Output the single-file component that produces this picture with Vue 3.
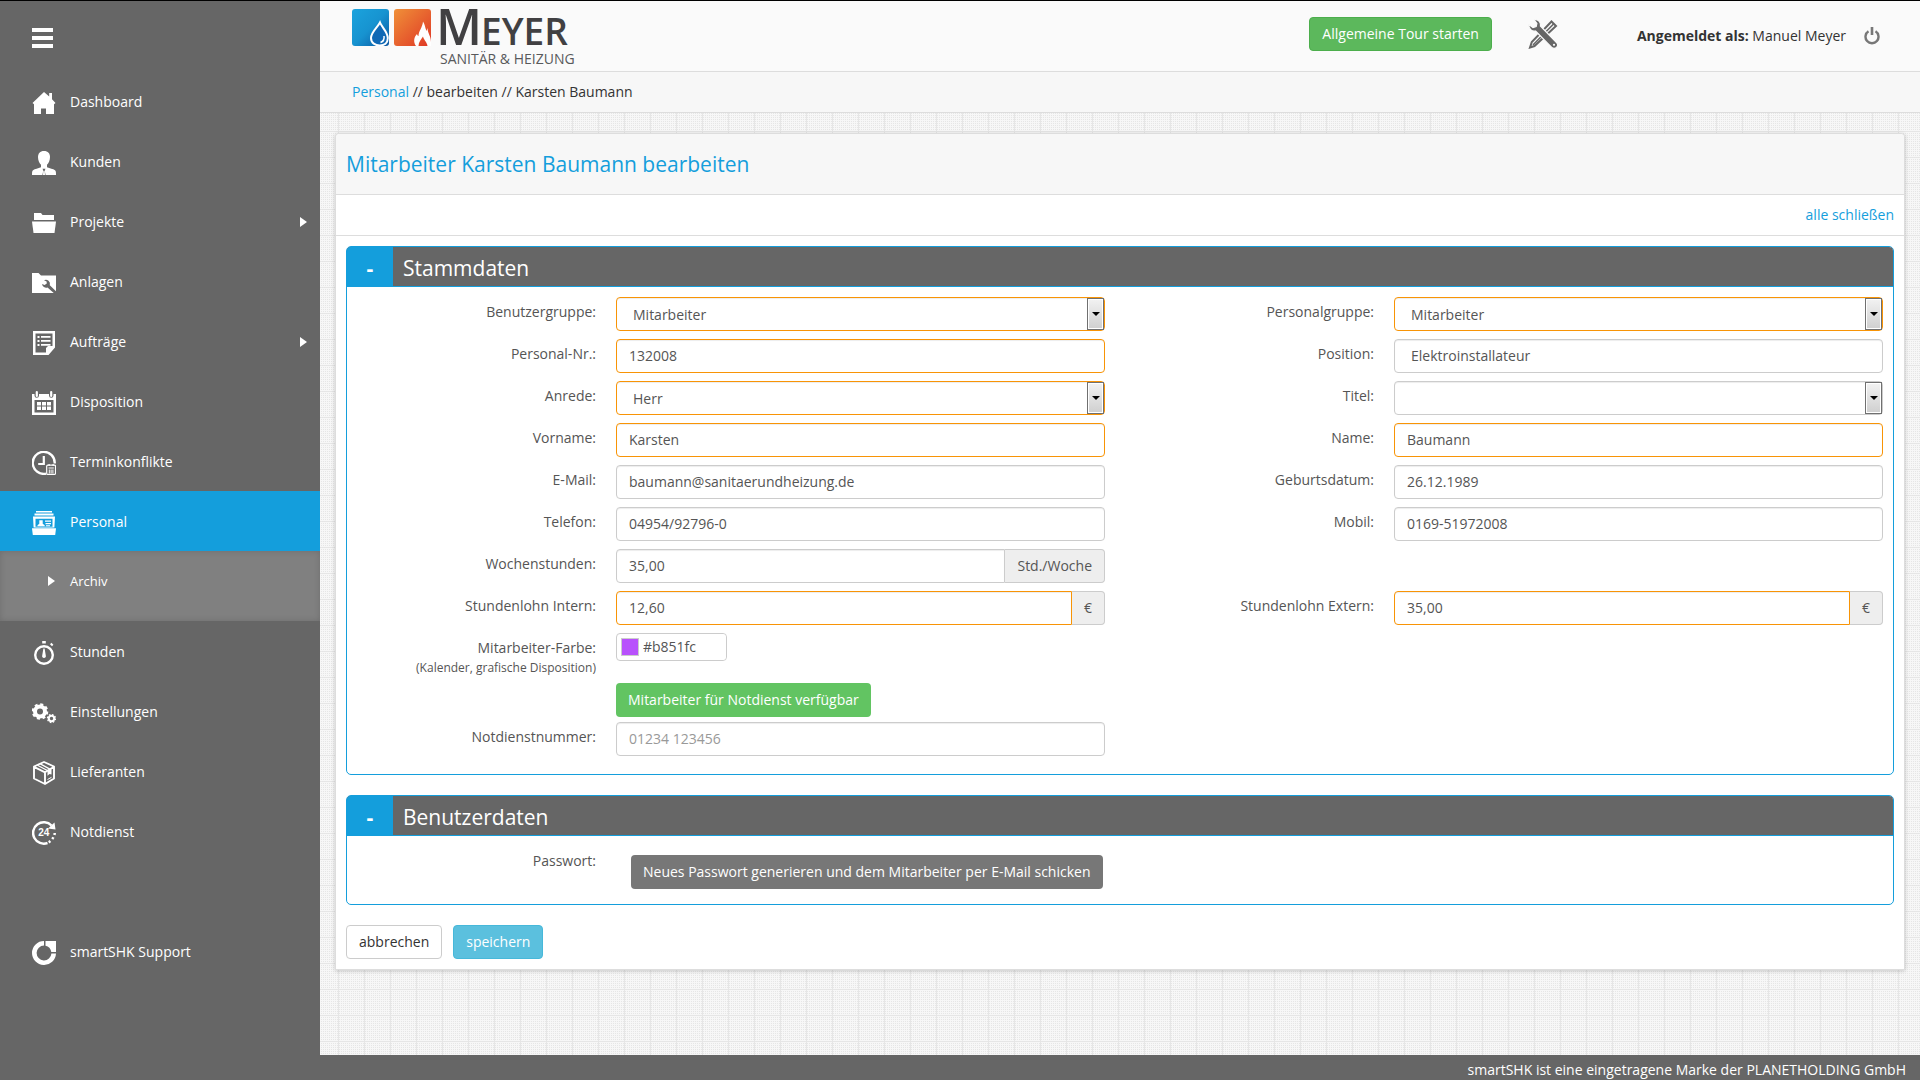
<script setup>
import { ref } from 'vue'

const menu = [
  { icon: 'home', label: 'Dashboard' },
  { icon: 'user', label: 'Kunden' },
  { icon: 'folder', label: 'Projekte', more: true },
  { icon: 'plant', label: 'Anlagen' },
  { icon: 'order', label: 'Aufträge', more: true },
  { icon: 'calendar', label: 'Disposition' },
  { icon: 'clock', label: 'Terminkonflikte' },
  { icon: 'staff', label: 'Personal', active: true, children: ['Archiv'] },
  { icon: 'watch', label: 'Stunden' },
  { icon: 'gears', label: 'Einstellungen' },
  { icon: 'box', label: 'Lieferanten' },
  { icon: 'emergency', label: 'Notdienst' },
  { icon: 'support', label: 'smartSHK Support', spaced: true },
]

const fields = ref([
  { id: 'benutzergruppe', label: 'Benutzergruppe:', side: 'left', type: 'select', value: 'Mitarbeiter', required: true },
  { id: 'personalgruppe', label: 'Personalgruppe:', side: 'right', type: 'select', value: 'Mitarbeiter', required: true },
  { id: 'personalnr', label: 'Personal-Nr.:', side: 'left', type: 'text', value: '132008', required: true },
  { id: 'position', label: 'Position:', side: 'right', type: 'text', value: 'Elektroinstallateur', combo: true },
  { id: 'anrede', label: 'Anrede:', side: 'left', type: 'select', value: 'Herr', required: true },
  { id: 'titel', label: 'Titel:', side: 'right', type: 'select', value: '' },
  { id: 'vorname', label: 'Vorname:', side: 'left', type: 'text', value: 'Karsten', required: true },
  { id: 'name', label: 'Name:', side: 'right', type: 'text', value: 'Baumann', required: true },
  { id: 'email', label: 'E-Mail:', side: 'left', type: 'text', value: 'baumann@sanitaerundheizung.de' },
  { id: 'geburtsdatum', label: 'Geburtsdatum:', side: 'right', type: 'text', value: '26.12.1989' },
  { id: 'telefon', label: 'Telefon:', side: 'left', type: 'text', value: '04954/92796-0' },
  { id: 'mobil', label: 'Mobil:', side: 'right', type: 'text', value: '0169-51972008' },
  { id: 'wochenstunden', label: 'Wochenstunden:', side: 'left', type: 'text', value: '35,00', unit: 'Std./Woche' },
  { id: 'lohnintern', label: 'Stundenlohn Intern:', side: 'left', type: 'text', value: '12,60', unit: '€', required: true },
  { id: 'lohnextern', label: 'Stundenlohn Extern:', side: 'right', type: 'text', value: '35,00', unit: '€', required: true },
])

const color = ref('#b851fc')
const emergencyNumber = ref('')
</script>

<template>
  <div class="page">
    <aside class="sidebar">
      <button class="toggle" type="button" aria-label="Menü">
        <span></span><span></span><span></span>
      </button>
      <nav>
        <template v-for="item in menu" :key="item.label">
          <a href="#" class="item" :class="{ active: item.active, spaced: item.spaced }">
            <svg class="icon" viewBox="0 0 24 24" width="24" height="24" fill="#fff">
              <g v-if="item.icon === 'home'">
                <path d="M12 1 0.5 12 2 13.2V23h7v-5.5h5V23h8v-9.800l1.500-1.200L20 8.300V2h-2.800v3.600z" />
              </g>
              <g v-else-if="item.icon === 'user'">
                <path d="M12 0c4 0 6 2.600 6 6 0 3.500-1.500 6.300-3 7.800v2.400c3 1.300 6 1.600 8 3 1 .8 1 2.500 1 4.800H0c0-2.300 0-4 1-4.800 2-1.400 5-1.700 8-3v-2.400C7.500 12.300 6 9.500 6 6c0-3.400 2-6 6-6z" />
                <path d="M10.500 17.800h3l-.8 1.700.9 4.500h-3.200l.9-4.500z" fill="#666" />
                <path d="M11.300 20h1.400l.3 4h-2z" />
              </g>
              <g v-else-if="item.icon === 'folder'">
                <path d="M2 2h7l1.500 2H22v5H2z" />
                <path d="M0 10.500h24l-1.500 11.500h-21z" />
              </g>
              <g v-else-if="item.icon === 'plant'">
                <path d="M0 2h6.500l2.500 2.500h15V22H0z" />
                <path d="M12 9.200a4.200 4.200 0 0 1 5.800 5L24 20.300V24l-8.500-7.600a4.200 4.200 0 0 1-5.500-3.400l2.600 1 2.200-1.500-.2-2z" fill="#666" />
              </g>
              <g v-else-if="item.icon === 'order'">
                <path d="M1 0h22v16.500L16.500 24H1zM3.500 2.500v19H14V17l2-2h4.500V2.500z" fill-rule="evenodd" />
                <path d="M5.500 5h2v2h-2zM9 5h9.500v1.800H9zM5.500 9h2v2h-2zM9 9h9.500v1.800H9zM5.500 13h2v2h-2zM9 13h9.500v1.800H9z" />
              </g>
              <g v-else-if="item.icon === 'calendar'">
                <path d="M0 3h2.500v1.500A2.200 2.200 0 0 0 7 4.500V3h10v1.500a2.200 2.200 0 0 0 4.500 0V3H24v21H0zM2.500 9v12.500h19V9z" fill-rule="evenodd" />
                <rect x="3.700" y="0" width="2.200" height="6" rx="1.100" />
                <rect x="18.100" y="0" width="2.200" height="6" rx="1.100" />
                <path d="M5 11h4v3.500H5zM10 11h4v3.500h-4zM15 11h4v3.500h-4zM5 15.500h4V19H5zM10 15.500h4V19h-4zM15 15.500h4V19h-4z" />
              </g>
              <g v-else-if="item.icon === 'clock'">
                <path d="M22.700 12.500A11 11 0 1 0 14 22.600" fill="none" stroke="#fff" stroke-width="2.400" />
                <path d="M11.800 5v8H6.200" fill="none" stroke="#fff" stroke-width="2.200" />
                <rect x="14.700" y="14.200" width="8.800" height="9.200" rx="1" fill="none" stroke="#fff" stroke-width="1.200" />
                <path d="M16.500 16.500h5.300v1h-5.300zM16.800 18.500h1v4h-1zM18.600 18.500h1v4h-1zM20.400 18.500h1v4h-1zM16.500 13h1.200v2h-1.200zM20.500 13h1.200v2h-1.200z" />
              </g>
              <g v-else-if="item.icon === 'staff'">
                <path d="M4 0h16v1.600H4zM2.500 2.600h19v1.800h-19z" />
                <path d="M1 5.500h22l-.6 11H1.600zM3.500 7.800v8h17v-8z" fill-rule="evenodd" />
                <path d="M0 17.200h24l-.8 6.800H.8z" />
                <path d="M7.300 9.300h3.400v3.500l2 1.500v1H5.500v-1l1.800-1.500zM13 9.500h6v1.300h-6zM13.500 12h5.500v1.200h-5.500zM14 14.200h4v1h-4z" />
              </g>
              <g v-else-if="item.icon === 'watch'">
                <circle cx="12" cy="14" r="8.800" fill="none" stroke="#fff" stroke-width="2.400" />
                <path d="M10.200 0h3.600v2.600h-3.600zM18 3.200l1.400-1.400 2 2L20 5.200zM11.400 7.500h1.200l1.200 7a1.900 1.900 0 1 1-3.600 0z" />
              </g>
              <g v-else-if="item.icon === 'gears'">
                <circle cx="8" cy="10.500" r="5" fill="none" stroke="#fff" stroke-width="4" />
                <circle cx="8" cy="10.500" r="7.200" fill="none" stroke="#fff" stroke-width="2.200" stroke-dasharray="3 2.655" />
                <circle cx="19.500" cy="17.500" r="2.700" fill="none" stroke="#fff" stroke-width="2" />
                <circle cx="19.500" cy="17.500" r="4" fill="none" stroke="#fff" stroke-width="1.300" stroke-dasharray="1.600 1.542" />
              </g>
              <g v-else-if="item.icon === 'box'">
                <path d="M12 1 22 5.500v12L13 23 2 17.500v-12zM2 5.800l11 5.500 9-5.500M13 11.300V23" fill="none" stroke="#fff" stroke-width="1.900" stroke-linejoin="round" />
                <path d="M4.700 4.500 15.500 10.300v4.500l2-1.800 2 .5V8.300L9 2.600l-1.400.6L17.500 8.700l-.8.7L6.200 3.900z" />
                <path d="M15.500 18.500l4-2.200" stroke="#fff" stroke-width="1" />
              </g>
              <g v-else-if="item.icon === 'emergency'">
                <path d="M19.500 4.500A10.700 10.700 0 1 0 15.500 22" fill="none" stroke="#fff" stroke-width="2.500" />
                <path d="M22.500 1.500 23.500 8.500 16 7.500zM21.500 12h2.500l-.3 2.200-2.500-.4zM20.200 15.800l2.300 1-1.200 2-2-1.300zM17.500 19l1.700 1.900-1.900 1.500-1.200-2.200z" />
                <text x="6.200" y="15.200" class="emergency-text">24</text>
              </g>
              <g v-else>
                <path d="M12 0v4.600a7.400 7.400 0 1 0 7.400 7.900H24A12 12 0 1 1 12 0z" />
                <path d="M13.500 0H24v11h-4.700c-.5-3.300-2.600-5.600-5.800-6.200z" />
              </g>
            </svg>
            <span class="item-label">{{ item.label }}</span>
            <span v-if="item.more" class="caret"></span>
          </a>
          <div v-if="item.children" class="submenu">
            <a v-for="child in item.children" :key="child" href="#" class="subitem">
              <span class="caret"></span>{{ child }}
            </a>
          </div>
        </template>
      </nav>
    </aside>

    <div class="main">
      <header class="topbar">
        <svg class="logo" width="224" height="62" viewBox="0 0 224 62" role="img" aria-label="Meyer Sanitär &amp; Heizung">
          <defs>
            <linearGradient id="water" x1="0" y1="0" x2="1" y2="1">
              <stop offset="0" stop-color="#1ba3dd" />
              <stop offset="0.500" stop-color="#1793d0" />
              <stop offset="1" stop-color="#0b55a0" />
            </linearGradient>
            <linearGradient id="fire" x1="0" y1="0" x2="1" y2="1">
              <stop offset="0" stop-color="#f09038" />
              <stop offset="1" stop-color="#df3826" />
            </linearGradient>
          </defs>
          <rect x="0" y="3" width="37" height="37" rx="3" fill="url(#water)" />
          <path d="M28 16.500c2 5 7.800 9.500 7.800 15.500 0 5-3.600 7.500-8 7.500s-8.800-2.500-8.800-7.500c0-6 6.500-10.500 9-15.500z" fill="#1069b5" stroke="#fff" stroke-width="2" />
          <path d="M32 30c.5 3-1 5.500-3.500 6.500" fill="none" stroke="#fff" stroke-width="1.500" />
          <rect x="42" y="3" width="37" height="37" rx="3" fill="url(#fire)" />
          <path d="M64 40c-3-4-2-9 1-12 .3 1 .6 1.600 1.500 2 0-5 4-8.500 4.500-14.500 2 3 2 6 3.500 9.500l1-3c0 5 3.500 8 3.500 14V40h-3.500c-.5-4-3.500-5.500-4.500-9.500-2 3-4.500 5.500-4.500 9.500z" fill="#fff" />
          <text x="84" y="39" class="logo-big">M</text>
          <text x="129" y="39" class="logo-mid">EYER</text>
          <text x="88" y="58" class="logo-sub">SANITÄR &amp; HEIZUNG</text>
        </svg>
        <div class="tools">
          <button type="button" class="btn btn-tour">Allgemeine Tour starten</button>
          <a href="#" class="wrench" aria-label="Werkzeuge">
            <svg width="30" height="30" viewBox="0 0 30 30">
              <path d="M23.500 2.500 28 7 6.500 27 2 28.500 3.800 23z" fill="none" stroke="#666" stroke-width="2" />
              <path d="M26 4.500 5 26" stroke="#666" stroke-width="1.600" />
              <path d="M6 .8c4-.8 7 2 6.400 6.200L28.500 23.500a3.300 3.300 0 0 1-4.800 4.800L7.500 12C4 12.800.5 10 .8 5.500L5 8.500l3.200-1 .7-3.200z" fill="#666" stroke="#fafafa" stroke-width="1.200" />
              <circle cx="26" cy="25.800" r="1.100" fill="#fafafa" />
            </svg>
          </a>
          <div class="account">
            <span><b>Angemeldet als:</b> Manuel Meyer</span>
            <a href="#" class="power" aria-label="Abmelden">
              <svg width="16" height="18" viewBox="0 0 16 18">
                <path d="M4.500 4.300a6.500 6.500 0 1 0 7 0" fill="none" stroke="#777" stroke-width="2.400" />
                <path d="M8 0v8" stroke="#777" stroke-width="2.600" />
              </svg>
            </a>
          </div>
        </div>
      </header>

      <div class="breadcrumb"><a href="#">Personal</a>&nbsp;// bearbeiten // Karsten Baumann</div>

      <main class="content">
        <form class="card" @submit.prevent>
          <h1>Mitarbeiter Karsten Baumann bearbeiten</h1>
          <div class="card-links"><a href="#">alle schließen</a></div>
          <div class="card-body">
            <section class="group">
              <div class="group-head">
                <button type="button" class="collapse" aria-label="Stammdaten schließen">-</button>
                <h2>Stammdaten</h2>
              </div>
              <div class="fields">
                <div v-for="field in fields" :key="field.id" class="field" :class="field.side">
                  <label :for="field.id">{{ field.label }}</label>
                  <div v-if="field.type === 'select'" class="select">
                    <select :id="field.id" v-model="field.value" :class="{ required: field.required }">
                      <option>{{ field.value }}</option>
                    </select>
                    <span class="select-button"></span>
                  </div>
                  <div v-else class="control">
                    <input
                      :id="field.id"
                      v-model="field.value"
                      type="text"
                      :class="{ required: field.required, combo: field.combo, joined: field.unit }"
                    />
                    <span v-if="field.unit" class="unit">{{ field.unit }}</span>
                  </div>
                </div>

                <div class="field left">
                  <label for="farbe">Mitarbeiter-Farbe:<small>(Kalender, grafische Disposition)</small></label>
                  <div class="color">
                    <span class="swatch" :style="{ background: color }"></span>
                    <input id="farbe" v-model="color" type="text" />
                  </div>
                </div>
                <div class="field left tight">
                  <span></span>
                  <div><button type="button" class="btn btn-available">Mitarbeiter für Notdienst verfügbar</button></div>
                </div>
                <div class="field left">
                  <label for="notdienst">Notdienstnummer:</label>
                  <div class="control">
                    <input id="notdienst" v-model="emergencyNumber" type="text" placeholder="01234 123456" />
                  </div>
                </div>
              </div>
            </section>

            <section class="group">
              <div class="group-head">
                <button type="button" class="collapse" aria-label="Benutzerdaten schließen">-</button>
                <h2>Benutzerdaten</h2>
              </div>
              <div class="fields password">
                <div class="field left">
                  <label for="passwort">Passwort:</label>
                  <div class="password-action">
                    <button id="passwort" type="button" class="btn btn-dark">Neues Passwort generieren und dem Mitarbeiter per E-Mail schicken</button>
                  </div>
                </div>
              </div>
            </section>

            <div class="actions">
              <button type="button" class="btn btn-plain">abbrechen</button>
              <button type="submit" class="btn btn-save">speichern</button>
            </div>
          </div>
        </form>
      </main>

      <footer>smartSHK ist eine eingetragene Marke der PLANETHOLDING GmbH</footer>
    </div>
  </div>
</template>

<style>
body {
  margin: 0;
}
</style>

<style scoped>
* {
  box-sizing: border-box;
}

.page {
  display: flex;
  min-height: 100vh;
  border-top: 1px solid #000;
  font-family: "Open Sans", "Noto Sans", sans-serif;
  font-size: 14px;
  line-height: 20px;
  color: #333;
}

button,
input,
select {
  font: inherit;
}

a {
  color: #149edc;
  text-decoration: none;
}

/* Sidebar */
.sidebar {
  flex: 0 0 320px;
  background: #666;
}

.toggle {
  display: flex;
  flex-direction: column;
  gap: 4px;
  width: 21px;
  margin: 27px 0 23px 32px;
  padding: 0;
  border: 0;
  background: none;
}

.toggle span {
  width: 21px;
  height: 4px;
  background: #fff;
}

.item {
  display: flex;
  align-items: center;
  height: 60px;
  padding: 2px 13px 0 32px;
  color: #fff;
}

.item.active {
  background: #149edc;
}

.item.spaced {
  margin-top: 60px;
}

.icon {
  margin: 2px 14px 0 0;
}

.item-label {
  flex: 1;
}

.emergency-text {
  font: bold 10px "Liberation Sans", sans-serif;
}

.caret {
  border-style: solid;
  border-width: 5px 0 5px 7px;
  border-color: transparent transparent transparent #fff;
}

.submenu {
  height: 70px;
  background: #808080;
  box-shadow: inset 0 0 6px rgba(0, 0, 0, 0.15);
}

.subitem {
  display: flex;
  align-items: center;
  gap: 15px;
  height: 60px;
  padding-left: 48px;
  font-size: 13px;
  color: #fff;
}

/* Header */
.main {
  display: flex;
  flex: 1;
  flex-direction: column;
  min-width: 0;
}

.topbar {
  display: flex;
  justify-content: space-between;
  height: 71px;
  padding: 0 40px 0 32px;
  border-bottom: 1px solid #ddd;
  background: #fafafa;
}

.logo {
  margin-top: 5px;
}

.logo-big {
  font-size: 50px;
  font-weight: 600;
  fill: #414042;
}

.logo-mid {
  font-size: 37px;
  font-weight: 600;
  fill: #414042;
}

.logo-sub {
  font-size: 14px;
  fill: #58595b;
}

.tools {
  display: flex;
  align-items: center;
  height: 34px;
  margin-top: 16px;
}

.wrench {
  display: flex;
  margin: 0 79px 0 36px;
}

.account {
  display: flex;
  align-items: center;
  gap: 18px;
  margin-top: 4px;
}

.power {
  display: flex;
}

.breadcrumb {
  padding: 10px 32px;
  border-bottom: 1px solid #ddd;
  background: #f7f7f7;
}

/* Content */
.content {
  flex: 1;
  padding: 20px 15px;
  background-color: #f7f7f7;
  background-image:
    linear-gradient(90deg, #e6e6e6 1px, transparent 1px),
    linear-gradient(#e6e6e6 1px, transparent 1px),
    linear-gradient(90deg, #f7f7f7 1px, transparent 1px),
    linear-gradient(#e6e6e6 1px, transparent 1px);
  background-position: 18px 18px, 18px 18px, 0 0, 0 0;
  background-size: 26px 26px, 26px 26px, 2px 2px, 2px 2px;
}

.card {
  border: 1px solid #ddd;
  border-radius: 4px 4px 0 0;
  background: #fff;
  box-shadow: 0 1px 4px rgba(0, 0, 0, 0.2);
}

h1,
h2 {
  margin: 0;
  font-size: 21px;
  font-weight: 400;
}

h1 {
  padding: 15px 10px;
  border-bottom: 1px solid #ddd;
  border-radius: 4px 4px 0 0;
  background: #f7f7f7;
  line-height: 30px;
  color: #149edc;
}

.card-links {
  padding: 10px;
  border-bottom: 1px solid #ddd;
  text-align: right;
}

.card-body {
  display: flex;
  flex-direction: column;
  gap: 20px;
  padding: 10px;
}

.group {
  border: 1px solid #149edc;
  border-radius: 5px;
  overflow: hidden;
}

.group-head {
  display: flex;
  height: 40px;
  border-bottom: 1px solid #149edc;
  background: #666;
  color: #fff;
}

.group-head h2 {
  padding-left: 10px;
  line-height: 43px;
}

.collapse {
  width: 46px;
  padding: 2px 0 0;
  border: 0;
  background: #149edc;
  font-size: 21px;
  font-weight: 700;
  color: #fff;
}

.fields {
  display: grid;
  grid-template-columns: 1fr 1fr;
  gap: 8px 20px;
  padding: 10px 10px 18px 0;
}

.fields.password {
  padding-bottom: 15px;
}

.field {
  display: grid;
  grid-template-columns: 249px minmax(0, 1fr);
  column-gap: 20px;
  align-items: start;
}

.left {
  grid-column: 1;
}

.right {
  grid-column: 2;
}

.tight {
  margin-bottom: -3px;
}

label {
  padding-top: 5px;
  text-align: right;
  color: #555;
}

small {
  display: block;
  margin-bottom: -3px;
  font-size: 12px;
  line-height: 20px;
}

.control {
  display: flex;
}

input,
select {
  width: 100%;
  min-width: 0;
  height: 34px;
  margin: 0;
  padding: 0 12px 2px;
  border: 1px solid #ccc;
  border-radius: 4px;
  outline: 0;
  background: #fff;
  box-shadow: inset 0 1px 1px rgba(0, 0, 0, 0.075);
  color: #555;
}

input::placeholder {
  color: #999;
  opacity: 1;
}

input.combo {
  padding-left: 16px;
}

input.joined {
  flex: 1;
  border-radius: 4px 0 0 4px;
}

.required {
  border-color: #f89406;
}

.unit {
  padding: 6px 12px;
  border: 1px solid #ccc;
  border-left: 0;
  border-radius: 0 4px 4px 0;
  background: #eee;
  color: #555;
}

.select {
  position: relative;
}

select {
  padding: 2px 20px 0 16px;
  appearance: none;
}

.select-button {
  position: absolute;
  top: 1px;
  right: 1px;
  bottom: 1px;
  display: flex;
  align-items: center;
  justify-content: center;
  width: 17px;
  border: 1px solid #707070;
  background: linear-gradient(#f2f2f2, #cfcfcf);
  box-shadow: inset 0 0 0 1px #fff;
  pointer-events: none;
}

.select-button::after {
  border-style: solid;
  border-width: 4px 4px 0;
  border-color: #000 transparent transparent;
  content: "";
}

.color {
  display: flex;
  align-items: center;
  gap: 4px;
  width: 111px;
  height: 28px;
  margin-bottom: 14px;
  padding-left: 4px;
  border: 1px solid #ccc;
  border-radius: 4px;
}

.swatch {
  flex: 0 0 18px;
  height: 18px;
  border: 1px solid #ccc;
}

.color input {
  height: 26px;
  padding: 0 0 2px;
  border: 0;
  box-shadow: none;
}

/* Buttons */
.btn {
  height: 34px;
  padding: 0 12px;
  border: 1px solid transparent;
  border-radius: 4px;
  white-space: nowrap;
  color: #fff;
}

.btn-tour {
  border-color: #4cae4c;
  background: #5cb85c;
}

.btn-available {
  border: 0;
  background: #62c462;
}

.btn-dark {
  border: 0;
  background: #777;
}

.btn-plain {
  border-color: #ccc;
  background: #fff;
  color: #333;
}

.btn-save {
  border-color: #46b8da;
  background: #5bc0de;
}

.field .btn {
  display: block;
}

.password-action {
  padding: 9px 0 0 15px;
}

.actions {
  display: flex;
  gap: 11px;
}

footer {
  height: 25px;
  padding: 5px 14px 0 0;
  background: #666;
  text-align: right;
  line-height: 20px;
  color: #fff;
}
</style>
